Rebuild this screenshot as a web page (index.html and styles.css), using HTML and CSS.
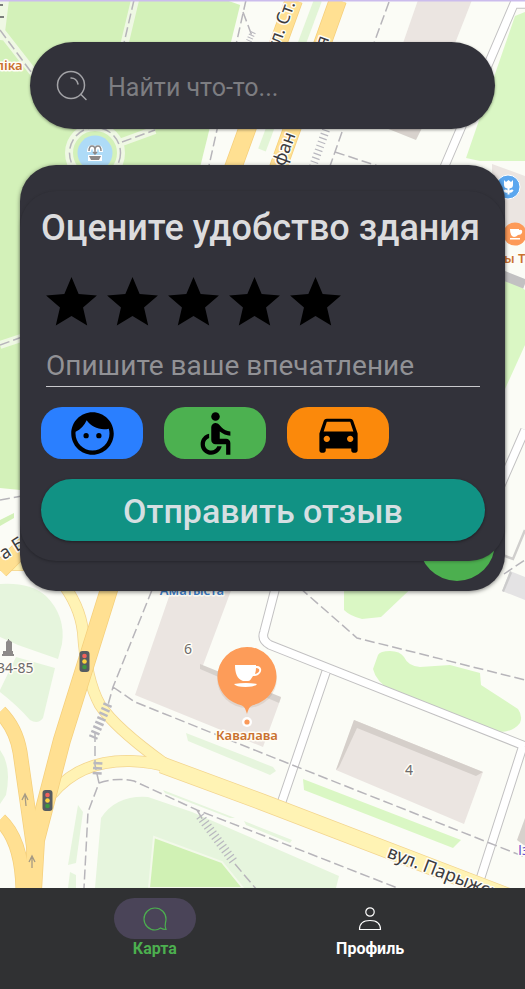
FILE: index.html
```html
<!DOCTYPE html>
<html lang="ru">
<head>
<meta charset="utf-8">
<meta name="viewport" content="width=device-width, initial-scale=1">
<title>Карта</title>
<link rel="stylesheet" href="styles.css">
</head>
<body>
<main class="screen">
  <svg class="map" viewBox="0 0 525 888" preserveAspectRatio="xMidYMin slice" aria-hidden="true">
    <rect width="525" height="888" fill="#fbfcf6"/>
    <!-- parks -->
    <g fill="#d3f1b9">
      <path d="M6 0H226L243 6L208 165L170 300L20 490L0 488V30Z"/>
      <path d="M525 12L515 16L466 158L480 161H525Z" fill="#daf7c4"/>
      <path d="M500 270L525 290V345L500 400Z" fill="#daf7c4"/>
      <path d="M344 580H420L381 617L362 619Q350 616 344 610Z" fill="#daf7c4"/>
      <path d="M378 655Q380 651 390 651Q400 651 404 657Q408 666 420 667L450 665L480 673L481 685L518 709Q523 716 520 723Q513 732 500 732L487 731L432 705L392 691Q376 682 373 669Z" fill="#daf7c4"/>
      <path d="M303 779L304 790L453 848L461 840Z" fill="#daf7c4"/>
      <path d="M0 520L14 513V518L0 526Z"/>
    </g>
    <g fill="#e6f5dd">
      <path d="M0 584Q30 582 46 596Q66 616 62 644L58 659L18 645L0 637Z"/>
      <path d="M0 690L16 657L55 668L43 718Q38 725 30 720Q18 706 0 692Z"/>
      <path d="M0 750Q12 766 6 795L0 804Z"/>
      <path d="M186 733L188 741L270 775L276 771L273 767Z"/>
      <path d="M78 805L83 812L76 863L68 865Z"/>
      <path d="M70 872L76 875V888H68Z"/>
      <path d="M95 888L101 818Q116 795 148 797L192 812L339 876L336 888Z"/>
      <path d="M163 790L235 818L230 818L165 793ZM244 821L292 840L290 843L246 825Z"/>
    </g>
    <path d="M154 837L222 862L243 888H149Z" fill="#d0f1b4" stroke="#f3f9ea" stroke-width="2"/>
    <path d="M318 0L262 150" stroke="#e2f5d6" stroke-width="8"/>
    <!-- light footpaths -->
    <g fill="none" stroke="#eff8e4" stroke-width="8">
      <path d="M0 0L5 0L0 40M135 0L124 46M0 30L36 76M122 142L155 130M0 345L24 337"/>
      <path d="M246 0L204 170" stroke="#fafcf4" stroke-width="9"/>
      <circle cx="95" cy="153" r="26"/>
    </g>
    <circle cx="95" cy="153" r="17.500" fill="#aedbf7"/>
    <!-- buildings -->
    <g fill="#ebe5e1">
      <path d="M418 0H472L454 46H402Z"/>
      <path d="M386 128L416 140L422 128Z" fill="#d8d2cd"/>
      <path d="M492 164L525 176V240L492 230Z"/>
      <path d="M172 588H232L202 668L281 698L263 747L135 695Z"/>
      <path d="M200 664L281 697L279 703L200 669Z" fill="#d6d1cc"/>
      <path d="M354 720L483 772L464 824L336 770Z"/>
      <path d="M354 720L483 772L476 776L357 728L339 767L336 770Z" fill="#d5cfca"/>
      <path d="M510 571L525 577V600L502 591Z" fill="#e4e3e4"/>
      <path d="M510 571L502 591L504 592L512 573Z" fill="#ccc"/>
      <path d="M525 818L517 840L525 846Z" fill="#d6d1cc"/>
    </g>
    <!-- minor streets -->
    <g fill="none" stroke="#c2c1c2" stroke-width="9.500">
      <path d="M525 4H514L443 170M525 430L500 487M277 582L264 632Q261 640 270 645L525 746M326 672L281 804M523 746L478 886M502 275L525 284"/>
    </g>
    <g fill="none" stroke="#fff" stroke-width="7.500">
      <path d="M525 4H514L443 170M525 430L500 487M277 582L264 632Q261 640 270 645L525 746M326 672L281 804M523 746L478 886"/>
    </g>
    <path d="M500 554L513 559L525 530" fill="none" stroke="#d0cfcd" stroke-width="2.500"/>
    <!-- main roads -->
    <g fill="none">
      <g stroke="#f3d58f">
        <path d="M0 565H35M60 580Q80 605 83 632Q86 680 100 705Q115 728 165 764M52 794Q80 760 130 761Q155 762 170 768" stroke-width="12"/>
        <path d="M162 765L262 802L510 897" stroke-width="17"/>
      </g>
      <g stroke="#fff3b4">
        <path d="M0 565H35M60 580Q80 605 83 632Q86 680 100 705Q115 728 165 764M52 794Q80 760 130 761Q155 762 170 768" stroke-width="10.500"/>
        <path d="M162 765L262 802L510 897" stroke-width="15.500"/>
      </g>
      <g stroke="#f5cf7c">
        <path d="M294 0L233 168M338 0L278 168M0 570L30 540M112 580L62 740L36 840L33 890" stroke-width="18"/>
        <path d="M0 712Q16 728 20 752L34 850L34 890M0 820Q22 840 23 890" stroke-width="15"/>
      </g>
      <g stroke="#ffe092">
        <path d="M294 0L233 168M338 0L278 168M0 570L30 540M112 580L62 740L36 840L33 890" stroke-width="16.500"/>
        <path d="M0 712Q16 728 20 752L34 850L34 890M0 820Q22 840 23 890" stroke-width="13.500"/>
      </g>
    </g>
    <!-- pedestrian routes -->
    <g fill="none" stroke="#b7b5ba" stroke-width="1.500" stroke-dasharray="10 4">
      <path d="M134 0L124 43M0 30L34 76M122 142L155 130M0 345L22 337M246 0L208 170"/>
      <circle cx="95" cy="153" r="25.500"/>
      <path d="M243 12L252 36M389 2L374 43M342 132L330 166M335 152L378 166"/>
      <path d="M152 590L113 687L108 705M113 687L135 702L262 753L525 857M95 732V765L99 783L88 812L84 888M99 783Q116 777 134 781L197 810L262 835L400 889M197 810L203 820M235 864L257 890M300 588L357 638L525 680M504 574L525 560M0 500L22 496"/>
    </g>
    <g fill="none" stroke="#b9b8bf">
      <path d="M108 704L93 738M98 762L97 776" stroke-width="9" stroke-dasharray="2.500 2.500"/>
      <path d="M200 816L234 862" stroke-width="9" stroke-dasharray="1.200 3"/>
      <path d="M326 130L313 166" stroke-width="8" stroke-dasharray="1.200 3"/>
      <path d="M253 32L248 43" stroke-width="6" stroke-dasharray="1 2"/>
    </g>
    <g fill="none" stroke="#a59a84" stroke-width="1.300">
      <path d="M26 806L25 795M22 800L25 794L28 800M32 868V857M29 862L32 856L35 862"/>
    </g>
    <!-- traffic lights -->
    <g id="lights">
      <rect x="79.500" y="651" width="10" height="21" rx="3" fill="#565b61"/>
      <circle cx="84.500" cy="656" r="2.300" fill="#f0625c"/><circle cx="84.500" cy="661.500" r="2.300" fill="#fbd140"/><circle cx="84.500" cy="667" r="2.300" fill="#3f9640"/>
    </g>
    <use href="#lights" x="-37" y="139"/>
    <!-- fountain and monument -->
    <g fill="none" stroke="#fff" stroke-width="4"><path d="M89 152q0-5 3-5q3 0 3 5q0-5 3-5q3 0 3 5M90 157h10v2h-10z"/></g>
    <g fill="none" stroke="#8b8888" stroke-width="1.500"><path d="M89 151q0-5 3-5q3 0 3 4q0-4 3-4q3 0 3 5M95 148v6M93 152l2 2 2-2"/><path d="M89 156h12l-2 4h-8z" fill="#8b8888" stroke="none"/></g>
    <path d="M6 642l2-2v-1h1v1l3 2v9h1v3h1v2H2v-2h1v-3h3z" fill="#8d8a89"/>
    <!-- places -->
    <circle cx="508" cy="187" r="12" fill="#5ba7ef" stroke="#fff"/>
    <path d="M504 180l2 2 2.500-2 2.500 2 2-2v5q0 3-3.500 3.500v2q3-2 4 0q-2 3-4 2v2h-2v-2q-3 1-4-2q2-2 4 0v-2q-3.500-.5-3.500-3.500z" fill="#fff"/>
    <circle cx="515" cy="234" r="11.500" fill="#fd9a58"/>
    <path d="M510 229h9v1q4-1 3 3q-1 2-4 2q-2 2-4 2q-4-1-4-8zm0 9h10v1.500h-10z" fill="#fff"/>
    <circle cx="247" cy="678" r="30" fill="#8a5c3d" opacity=".12"/>
    <circle cx="247" cy="722" r="5" fill="#fff"/><circle cx="247" cy="722" r="2.600" fill="#fa9959"/>
    <path d="M247 647a29.500 29.500 0 0 1 29.500 29.500c0 14-10 25-23 28.500-4 1-5 4-6.500 9-1.500-5-2.500-8-6.500-9-13-3.500-23-14.500-23-28.500A29.500 29.500 0 0 1 247 647z" fill="#fd9c59"/>
    <path d="M235 665h21v1c6-1 7 6 2 9-2 1-4 1-5 1-2 3-3 5-5 5h-5c-6-2-8-8-8-16zm21 3q0 3-1 6c5-1 6-6 1-6zM234 684q12-2 23 0q-2 3-11.500 3t-11.500-3z" fill="#fff" fill-rule="evenodd"/>
    <g class="map-text">
      <text x="-4" y="70" class="place">ліка</text>
      <text x="504" y="263" class="place">ы Т</text>
      <text x="247" y="740" class="place" text-anchor="middle">Кавалава</text>
      <text x="192" y="595" class="metro" text-anchor="middle">Аматыста</text>
      <text x="518" y="855" class="transit">Із</text>
      <text x="-3" y="673" class="number">34-85</text>
      <text x="184" y="654" class="number">6</text>
      <text x="405" y="775" class="number">4</text>
      <text class="street" transform="translate(386 857) rotate(21)">вул. Парыжская</text>
      <text class="street" transform="translate(4 560) rotate(-32)">а Б</text>
      <text class="street" transform="translate(274 62) rotate(-70)">вул. Ст.</text>
      <text class="street" transform="translate(284 167) rotate(-70)">фан</text>
      <text class="street" transform="translate(326 48) rotate(-70)">я</text>
    </g>
    <path d="M0 5H3M0 17H4" stroke="#55555a" stroke-width="1.500"/>
    <rect width="525" height="1.500" fill="#cbbced"/>
  </svg>

  <form class="search" role="search">
    <svg class="search-icon" viewBox="0 0 32 32" aria-hidden="true">
      <circle cx="15" cy="15" r="13.500"/><path d="M25 24.500l5 5M15 8q5.500 0 7 6"/>
    </svg>
    <input class="search-input" type="search" aria-label="Поиск" placeholder="Найти что-то...">
  </form>

  <section class="place-card">
    <button class="fab" type="button" aria-label="Добавить отзыв"></button>
    <form class="review">
      <h1 class="review-title">Оцените удобство здания</h1>
      <fieldset class="stars" aria-label="Оценка">
        <label class="star"><input type="radio" name="rating" value="1" aria-label="1"><svg viewBox="0 0 24 24"><path d="M12 17.270L18.180 21l-1.640-7.030L22 9.240l-7.190-.610L12 2 9.190 8.630 2 9.240l5.460 4.730L5.820 21z"/></svg></label>
        <label class="star"><input type="radio" name="rating" value="2" aria-label="2"><svg viewBox="0 0 24 24"><path d="M12 17.270L18.180 21l-1.640-7.030L22 9.240l-7.190-.610L12 2 9.190 8.630 2 9.240l5.460 4.730L5.820 21z"/></svg></label>
        <label class="star"><input type="radio" name="rating" value="3" aria-label="3"><svg viewBox="0 0 24 24"><path d="M12 17.270L18.180 21l-1.640-7.030L22 9.240l-7.190-.610L12 2 9.190 8.630 2 9.240l5.460 4.730L5.820 21z"/></svg></label>
        <label class="star"><input type="radio" name="rating" value="4" aria-label="4"><svg viewBox="0 0 24 24"><path d="M12 17.270L18.180 21l-1.640-7.030L22 9.240l-7.190-.610L12 2 9.190 8.630 2 9.240l5.460 4.730L5.820 21z"/></svg></label>
        <label class="star"><input type="radio" name="rating" value="5" aria-label="5"><svg viewBox="0 0 24 24"><path d="M12 17.270L18.180 21l-1.640-7.030L22 9.240l-7.190-.610L12 2 9.190 8.630 2 9.240l5.460 4.730L5.820 21z"/></svg></label>
      </fieldset>
      <input class="comment" type="text" aria-label="Впечатление" placeholder="Опишите ваше впечатление">
      <div class="chips">
        <button class="chip chip-blue" type="button" aria-label="Дети">
          <svg viewBox="0 0 24 24"><path d="M9 11.750a1.250 1.250 0 1 0 0 2.500 1.250 1.250 0 0 0 0-2.500zm6 0a1.250 1.250 0 1 0 0 2.500 1.250 1.250 0 0 0 0-2.500zM12 2C6.480 2 2 6.480 2 12s4.480 10 10 10 10-4.480 10-10S17.520 2 12 2zm0 18c-4.410 0-8-3.590-8-8 0-.290.020-.580.050-.860 2.360-1.050 4.230-2.980 5.210-5.370C11.070 8.330 14.050 10 17.420 10c.780 0 1.530-.090 2.250-.260.210.710.330 1.470.330 2.260 0 4.410-3.590 8-8 8z"/></svg>
        </button>
        <button class="chip chip-green" type="button" aria-label="Доступная среда">
          <svg viewBox="0 0 24 24"><circle cx="12" cy="4" r="2"/><path d="M19 13v-2c-1.540.020-3.090-.750-4.070-1.830l-1.290-1.430c-.170-.190-.380-.340-.610-.450-.010 0-.010-.010-.020-.010H13c-.350-.200-.750-.300-1.190-.260C10.760 7.110 10 8.040 10 9.090V15c0 1.100.900 2 2 2h5v5h2v-5.500c0-1.100-.900-2-2-2h-3v-3.450c1.290 1.070 3.250 1.940 5 1.950zm-6.170 5c-.410 1.160-1.520 2-2.830 2-1.660 0-3-1.340-3-3 0-1.310.840-2.410 2-2.830V12.100c-2.280.460-4 2.480-4 4.900 0 2.760 2.240 5 5 5 2.420 0 4.440-1.720 4.900-4h-2.070z"/></svg>
        </button>
        <button class="chip chip-orange" type="button" aria-label="Автомобиль">
          <svg viewBox="0 0 24 24"><path d="M18.920 6.010C18.720 5.420 18.160 5 17.500 5h-11c-.660 0-1.210.420-1.420 1.010L3 12v8c0 .550.450 1 1 1h1c.550 0 1-.450 1-1v-1h12v1c0 .550.450 1 1 1h1c.550 0 1-.450 1-1v-8l-2.080-5.990zM6.500 16c-.830 0-1.500-.670-1.500-1.500S5.670 13 6.500 13s1.500.670 1.500 1.500S7.330 16 6.500 16zm11 0c-.830 0-1.500-.670-1.500-1.500s.670-1.500 1.500-1.500 1.500.670 1.500 1.500-.670 1.500-1.500 1.500zM5 11l1.500-4.500h11L19 11H5z"/></svg>
        </button>
      </div>
      <button class="submit" type="submit">Отправить отзыв</button>
    </form>
  </section>
</main>

<nav class="tabs">
  <a class="tab tab-active" href="#map" aria-current="page">
    <span class="tab-icon"><svg viewBox="0 0 24 24" aria-hidden="true"><path d="M23 12A11 11 0 1 0 12 23q3 0 5.500-2 2.500 1.500 5.500 1.500-1.500-3-.5-7 .500-1.500.500-3.500z"/></svg></span>
    Карта
  </a>
  <a class="tab" href="#profile">
    <span class="tab-icon"><svg viewBox="0 0 24 24" aria-hidden="true"><circle cx="12" cy="5" r="4.200"/><path d="M1.500 22.500q0-9 10.500-9t10.500 9z" stroke-linejoin="round"/></svg></span>
    Профиль
  </a>
</nav>
</body>
</html>
```

FILE: styles.css
```css
* {
  box-sizing: border-box;
}

body {
  margin: 0;
  min-height: 100vh;
  display: flex;
  flex-direction: column;
  font-family: Roboto, "Noto Sans", sans-serif;
  background: #303133;
}

button,
input {
  font: inherit;
  border: 0;
  padding: 0;
  margin: 0;
}

.screen {
  position: relative;
  flex: 1;
  overflow: hidden;
  padding: 42px 20px;
  display: flex;
  flex-direction: column;
  gap: 36px;
}

/* The map fills the screen underneath the panels. */
.map {
  position: absolute;
  inset: 0;
  width: 100%;
  height: 100%;
}

.map-text {
  font-family: "Noto Sans", "Open Sans", sans-serif;
  font-size: 14px;
  paint-order: stroke;
  stroke: #fffdf6;
  stroke-width: 3px;
  stroke-linejoin: round;
}

.place {
  fill: #c9712f;
  font-size: 13px;
  font-weight: 600;
}

.metro {
  fill: #3d7fc9;
  font-size: 13px;
  font-weight: 600;
}

.transit {
  fill: #6552cf;
}

.number {
  fill: #6d6b6b;
}

.street {
  fill: #3c3c40;
  font-size: 18px;
}

.search {
  position: relative;
  height: 87px;
  margin: 0 10px;
  padding: 0 26px;
  display: flex;
  align-items: center;
  gap: 20px;
  border-radius: 44px;
  background: #32323a;
  box-shadow: 0 1px 3px rgba(0, 0, 0, 0.4);
}

.search-icon {
  width: 32px;
  height: 32px;
  flex: none;
  fill: none;
  stroke: #a3a3a7;
  stroke-width: 1.500;
  stroke-linecap: round;
}

.search-input {
  flex: 1;
  min-width: 0;
  height: 44px;
  padding-top: 4px;
  background: none;
  color: #dcdcde;
  font-size: 25px;
  outline: 0;
}

.search-input::placeholder {
  color: #7d7d81;
  opacity: 1;
}

.place-card {
  position: relative;
  padding: 26px 0 30px;
  border-radius: 36px;
  background: #32323a;
  box-shadow: 0 1px 4px rgba(0, 0, 0, 0.5);
}

.fab {
  position: absolute;
  right: 10px;
  bottom: 10px;
  width: 76px;
  height: 76px;
  border-radius: 50%;
  background: #4caf4f;
}

.review {
  position: relative;
  padding: 13px 20px 20px 21px;
  display: flex;
  flex-direction: column;
  border-radius: 36px;
  background: #32323a;
  box-shadow: 0 1px 3px rgba(0, 0, 0, 0.25);
}

.review-title {
  margin: 0;
  line-height: 48px;
  font-size: 36px;
  font-weight: 500;
  color: #dcdcde;
  white-space: nowrap;
}

.stars {
  display: flex;
  margin: 20px 0 0;
  padding: 0;
  border: 0;
}

.star {
  position: relative;
  width: 61px;
  height: 61px;
  cursor: pointer;
}

.star input {
  position: absolute;
  inset: 0;
  opacity: 0;
}

.star svg {
  display: block;
  width: 100%;
  height: 100%;
}

.comment {
  height: 44px;
  margin: 10px 5px 0;
  padding-top: 2px;
  border-bottom: 1px solid #c9c9cc;
  background: none;
  color: #dcdcde;
  font-size: 28px;
  outline: 0;
}

.comment::placeholder {
  color: #919195;
  opacity: 1;
}

.chips {
  display: flex;
  gap: 21px;
  margin-top: 20px;
}

.chip {
  width: 102px;
  height: 52px;
  display: grid;
  place-items: center;
  border-radius: 21px;
}

.chip svg {
  width: 51px;
  height: 51px;
}

.chip-blue {
  background: #2a7fff;
}

.chip-green {
  background: #4cb150;
}

.chip-orange {
  background: #fb890b;
}

.submit {
  height: 62px;
  margin-top: 20px;
  padding-top: 2px;
  border-radius: 31px;
  background: #119284;
  color: #d5dfe2;
  font-size: 34px;
  font-weight: 500;
  box-shadow: 0 1px 3px rgba(0, 0, 0, 0.4);
}

.tabs {
  height: 101px;
  padding: 10px 9% 0;
  display: flex;
  background: #303133;
}

.tab {
  flex: 1;
  display: flex;
  flex-direction: column;
  align-items: center;
  color: #fff;
  font-size: 16px;
  line-height: 20px;
  font-weight: 700;
  text-decoration: none;
}

.tab-active {
  color: #4caf4f;
}

.tab-icon {
  width: 82px;
  height: 41px;
  display: grid;
  place-items: center;
  border-radius: 21px;
}

.tab-active .tab-icon {
  background: #4a4458;
}

.tab-icon svg {
  width: 24px;
  height: 24px;
  fill: none;
  stroke: currentColor;
  stroke-width: 1.200;
}
```
